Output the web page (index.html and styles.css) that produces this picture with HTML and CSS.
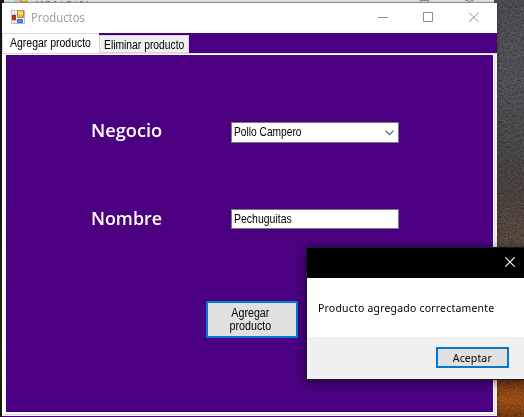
FILE: index.html
```
<!DOCTYPE html>
<html lang="es">
<head>
<meta charset="utf-8">
<title>Productos</title>
<link rel="stylesheet" href="styles.css">
</head>
<body>
<svg class="grain" width="524" height="417" aria-hidden="true">
  <filter id="noise" x="0" y="0" width="100%" height="100%" color-interpolation-filters="sRGB">
    <feTurbulence type="fractalNoise" baseFrequency="0.6" numOctaves="2" seed="4"/>
    <feColorMatrix type="saturate" values="0"/>
    <feComponentTransfer><feFuncA type="linear" slope="0" intercept="0.6"/></feComponentTransfer>
  </filter>
  <rect x="497" width="27" height="417" filter="url(#noise)"/>
</svg>
<div class="behind">
  <svg width="490" height="2" viewBox="0 0 490 2">
    <path d="M10 0h14v2H10z" fill="#d0d0d0"/><path d="M16 0h7v2h-7z" fill="#d6a532"/><path d="M18 0h4v1h-4z" fill="#ffdd72"/>
    <path d="M32 1h2M37 1h2M42 1h4M50 1h2M57 1h1M63 1h4M71 1h1M76 1h3M83 1h1" transform="translate(0 .5)" stroke="#929292"/>
    <path d="M416.500 2v-1.500h8v1.500M461 0q4 3 9 0" fill="none" stroke="#888"/>
  </svg>
</div>
<main class="window">
  <header class="titlebar">
    <svg class="app-icon" width="14" height="14" viewBox="0 0 14 14">
      <path d="M.5.5h13v13H.5z" fill="#f7f7f7" stroke="#b8b8b8"/>
      <path d="M3.500 0v4M3.500 10v4M0 4.500h6M0 10.500h6" stroke="#c9c9c9" fill="none"/>
      <path d="M6.500 1h6v6.500h-6z" fill="#f5bd35" stroke="#bd8420"/>
      <path d="M7 1.500h5v3H7z" fill="#ffdd72"/>
      <path d="M1.500 5.500h3v4h-3z" fill="#d33425" stroke="#a31c16"/>
      <path d="M6.500 9.500h5v3h-5z" fill="#5d91ec" stroke="#316bc9"/>
    </svg>
    <span class="title">Productos</span>
    <svg class="controls" width="101" height="11" viewBox="0 0 101 11">
      <path d="M0 5.500h10M45.500 .5h9v9h-9zM91 .5l9.500 9.500M100.500 .5L91 10" fill="none" stroke="#8f8f8f"/>
    </svg>
  </header>
  <nav class="tabs">
    <div class="tab active"><span>Agregar producto</span></div>
    <div class="tab"><span>Eliminar producto</span></div>
  </nav>
  <section class="page">
    <form class="form">
      <div class="row">
        <span class="label negocio">Negocio</span>
        <div class="field combo"><span class="pollo">Pollo Campero</span>
          <svg width="9" height="6" viewBox="0 0 9 6"><path d="M.5 .7l4 4 4-4" fill="none" stroke="#555" stroke-width="1.100"/></svg>
        </div>
      </div>
      <div class="row">
        <span class="label nombre">Nombre</span>
        <div class="field"><span>Pechuguitas</span></div>
      </div>
      <div class="button add"><span>Agregar</span><span>producto</span></div>
    </form>
  </section>
</main>
<div class="dialog">
  <div class="dialog-title"><svg width="10" height="10" viewBox="0 0 10 10"><path d="M.3.3l9.400 9.400M9.700.3L.3 9.700" stroke="#fff" stroke-width="1.100"/></svg></div>
  <div class="message"><span>Producto agregado correctamente</span></div>
  <div class="dialog-actions"><div class="button accept"><span>Aceptar</span></div></div>
</div>
</body>
</html>
```
FILE: styles.css
```
* { box-sizing: border-box; }
body {
  margin: 0;
  width: 524px;
  height: 417px;
  overflow: hidden;
  position: relative;
  font: 12px/13px "Liberation Sans", sans-serif;
  color: #000;
  background:
    linear-gradient(#17161d 0, #1c1922 200px, #3a2218 350px, #24140f 417px) 0 0 / 4px 417px no-repeat,
    linear-gradient(#4b4a51 0, #504e53 80px, #464445 150px, #483f3b 195px, #58483a 245px, #573628 340px, #7b3d15 382px, #9c4d16 400px, #70360f 417px);
}
body span { white-space: nowrap; }
.grain { position: absolute; left: 0; top: 0; mix-blend-mode: overlay; }
.behind {
  position: absolute;
  left: 4px; top: 0;
  width: 490px; height: 3px;
  overflow: hidden;
  background: #e9e9e9;
  border-bottom: 1px solid #aaa;
}
.behind svg { display: block; }
.window {
  position: relative;
  display: flex;
  flex-direction: column;
  width: 495px;
  height: 414px;
  margin: 3px 0 0 2px;
  background: #fff;
  border-bottom: 1px solid #4b0082;
  box-shadow: 0 0 4px #0006;
}
.titlebar { display: flex; align-items: center; flex: 0 0 30px; padding: 0 18px 2px 9px; }
.app-icon { margin-top: 0; }
.title { margin: 0 auto 0 6px; font: 12px/16px "Open Sans", sans-serif; color: #999; transform: scaleX(.945); transform-origin: 0 0; padding-top: 2px; }
.controls { margin: 1px 0 0 0; }
.tabs { display: flex; flex: 0 0 20px; background: linear-gradient(90deg, #fff 97px, #4b0082 97px); }
.tab { margin-top: 2px; width: 90px; height: 18px; border: 1px solid #d9d9d9; background: #f0f0f0; padding: 3px 0 0 4px; }
.tab.active { margin-top: 0; width: 97px; height: 20px; background: #fff; border-right: 0; border-bottom: 0; padding: 3px 0 0 7px; }
.tab span { display: inline-block; transform-origin: 0 0; transform: scaleX(.86); }
.tab.active span { transform: scaleX(.873); }
.page { flex: 1; padding: 2px 4px 4px; background: #fff; box-shadow: inset 0 1px #dcdcdc, inset -2px -1px #f0f0f0, inset -3px -2px #dcdcdc; }
.form { height: 357px; background: #4b0082; padding: 67px 0 0 85px; }
.row { display: flex; align-items: flex-start; height: 87px; }
.label { width: 140px; color: #fff; font: 600 17.500px/20px "Open Sans", sans-serif; transform-origin: 0 0; margin-top: -2px; }
.negocio { transform: scaleX(1.04); }
.nombre { transform: scaleX(1.02); margin-top: -1px; }
.field { display: flex; align-items: center; width: 168px; height: 21px; padding: 0 4px 0 2px; background: #fff; border: 1px solid #7a7a7a; }
.field span { transform-origin: 0 0; transform: scaleX(.875); }
.field .pollo { transform: scaleX(.85); }
.row + .row .field { height: 20px; }
.combo { justify-content: space-between; }
.button { display: flex; flex-direction: column; align-items: center; justify-content: center; background: #e1e1e1; border: 2px solid #0078d7; }
.add { width: 92px; height: 37px; margin: 5px 0 0 115px; padding-right: 3px; }
.add span { transform: scaleX(.89); }
.dialog {
  position: absolute;
  left: 306px; top: 247px;
  width: 220px; height: 133px;
  border: 1px solid #19191d;
  background: #fff;
  box-shadow: 0 2px 10px #0008;
  font: 11px/15px "Noto Sans", sans-serif;
}
.dialog-title { height: 30px; background: #000; display: flex; align-items: center; justify-content: flex-end; padding: 0 10px 2px 0; }
.message { height: 59px; padding: 22px 0 0 11px; }
.message span { display: inline-block; letter-spacing: .23px; transform: scaleX(.95); transform-origin: 0 0; }
.dialog-actions { height: 42px; background: #f0f0f0; display: flex; justify-content: flex-end; padding: 10px 16px 0 0; }
.accept { width: 73px; height: 21px; }
.accept span { letter-spacing: .1px; transform: scaleX(.96); }
```
